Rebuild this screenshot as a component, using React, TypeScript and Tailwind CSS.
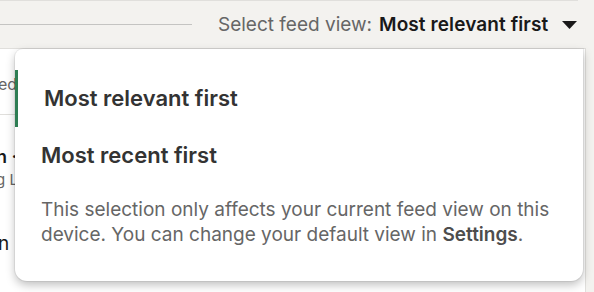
import React from "react";

export default function App() {
  return (
    <div
      className="relative w-[594px] h-[292px] overflow-hidden bg-[#f3f2ef]"
      style={{ fontFamily: "Inter, 'Open Sans', sans-serif" }}
    >
      <div className="h-px w-[578px] bg-[#e0dfdc]" />
      <div className="flex h-[47px] items-center">
        <div className="h-px w-[192px] bg-[#c4c4c2]" />
        <div className="ml-[26px] flex items-center text-[19px] leading-none">
          <span className="text-[#666666]">Select feed view:</span>
          <span className="ml-[7px] font-semibold tracking-[0.1px] text-[#191919]">Most relevant first</span>
          <svg className="ml-[14px]" width="15" height="8" viewBox="0 0 15 8">
            <path d="M0 0 H15 L7.5 8 Z" fill="#191919" />
          </svg>
        </div>
      </div>
      <div className="relative h-[244px] w-[586px] border-t border-r border-[#e0dfdc] bg-white">
        <div className="absolute left-[-2px] top-[23px] text-[16px] text-[#666666]">ed</div>
        <div className="absolute left-0 top-[65px] h-px w-[20px] bg-[#e0dfdc]" />
        <div className="absolute left-[-4px] top-[94px] text-[18px] font-semibold text-[#191919]">n ·</div>
        <div className="absolute left-[-4px] top-[120px] text-[15px] text-[#666666]">g L</div>
        <div className="absolute left-[-2px] top-[181px] text-[19px] text-[#191919]">n</div>
      </div>
      <div className="absolute left-[15px] top-[49px] flex h-[232px] w-[568px] flex-col rounded-tl-lg rounded-b-xl bg-white pt-[21px] shadow-[0_4px_10px_rgba(0,0,0,0.25),0_0_0_1px_rgba(0,0,0,0.06)]">
        <div className="flex h-[57px] items-center border-l-[3px] border-[#2e7d53] pl-[26px] text-[22px] font-semibold text-[#333333]">
          Most relevant first
        </div>
        <div className="flex h-[57px] items-center pl-[26px] text-[22px] font-semibold text-[#333333]">
          Most recent first
        </div>
        <div className="mt-[13px] w-[546px] pl-[26px] text-[19px] leading-[25px] text-[#666666]">
          This selection only affects your current feed view on this device. You can change your default view in{" "}
          <span className="font-semibold text-[#4d4d4d]">Settings</span>.
        </div>
      </div>
    </div>
  );
}
